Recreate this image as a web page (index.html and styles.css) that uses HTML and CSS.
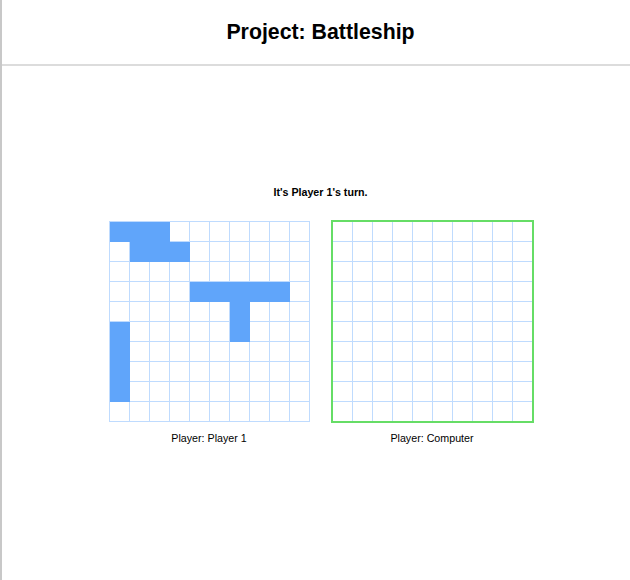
FILE: index.html
```html
<!DOCTYPE html>
<html lang="en">
<head>
<meta charset="utf-8">
<title>Project: Battleship</title>
<link rel="stylesheet" href="styles.css">
</head>
<body>
<header class="header">
  <h1 class="title">Project: Battleship</h1>
</header>
<main class="main">
  <p class="turn">It's Player 1's turn.</p>
  <div class="boards">
    <div class="player">
      <div class="board" id="board1"></div>
      <p class="label">Player: Player 1</p>
    </div>
    <div class="player">
      <div class="board board-active" id="board2"></div>
      <p class="label">Player: Computer</p>
    </div>
  </div>
</main>
<script>
  var ships = ["0,0","0,1","0,2","1,1","1,2","1,3","3,4","3,5","3,6","3,7","3,8","4,6","5,6","5,0","6,0","7,0","8,0"];
  function build(el, showShips) {
    for (var r = 0; r < 10; r++) {
      for (var c = 0; c < 10; c++) {
        var d = document.createElement("div");
        d.className = "cell";
        if (showShips && ships.indexOf(r + "," + c) !== -1) d.className += " ship";
        el.appendChild(d);
      }
    }
  }
  build(document.getElementById("board1"), true);
  build(document.getElementById("board2"), false);
</script>
</body>
</html>
```
FILE: styles.css
```css
html, body {
  margin: 0;
  padding: 0;
  background: #fff;
}
body {
  border-left: 2px solid #c8c8c8;
  min-height: 100vh;
  box-sizing: border-box;
  font-family: "Liberation Sans", Arial, sans-serif;
  color: #000;
}
.header {
  height: 64px;
  border-bottom: 2px solid #dcdcdc;
  display: flex;
  align-items: center;
  justify-content: center;
  padding-left: 9px;
}
.title {
  margin: 0;
  font-size: 21.3px;
  font-weight: bold;
}
.main {
  padding-left: 9px;
  padding-top: 119px;
  display: flex;
  flex-direction: column;
  align-items: center;
}
.turn {
  margin: 0;
  font-size: 10.7px;
  font-weight: bold;
  line-height: 14px;
}
.boards {
  display: flex;
  gap: 22px;
  margin-top: 22px;
}
.player {
  display: flex;
  flex-direction: column;
  align-items: center;
}
.board {
  display: grid;
  grid-template-columns: repeat(10, 20px);
  grid-template-rows: repeat(10, 20px);
  border-left: 1px solid #bfdbfe;
  border-top: 1px solid #bfdbfe;
}
.board-active {
  outline: 2px solid #66dd66;
  outline-offset: -1px;
}
.cell {
  box-sizing: border-box;
  border-right: 1px solid #bfdbfe;
  border-bottom: 1px solid #bfdbfe;
}
.cell.ship {
  background: #60a5fa;
  border-color: #60a5fa;
}
.label {
  margin: 9px 0 0;
  font-size: 10.7px;
  line-height: 14px;
}
```
